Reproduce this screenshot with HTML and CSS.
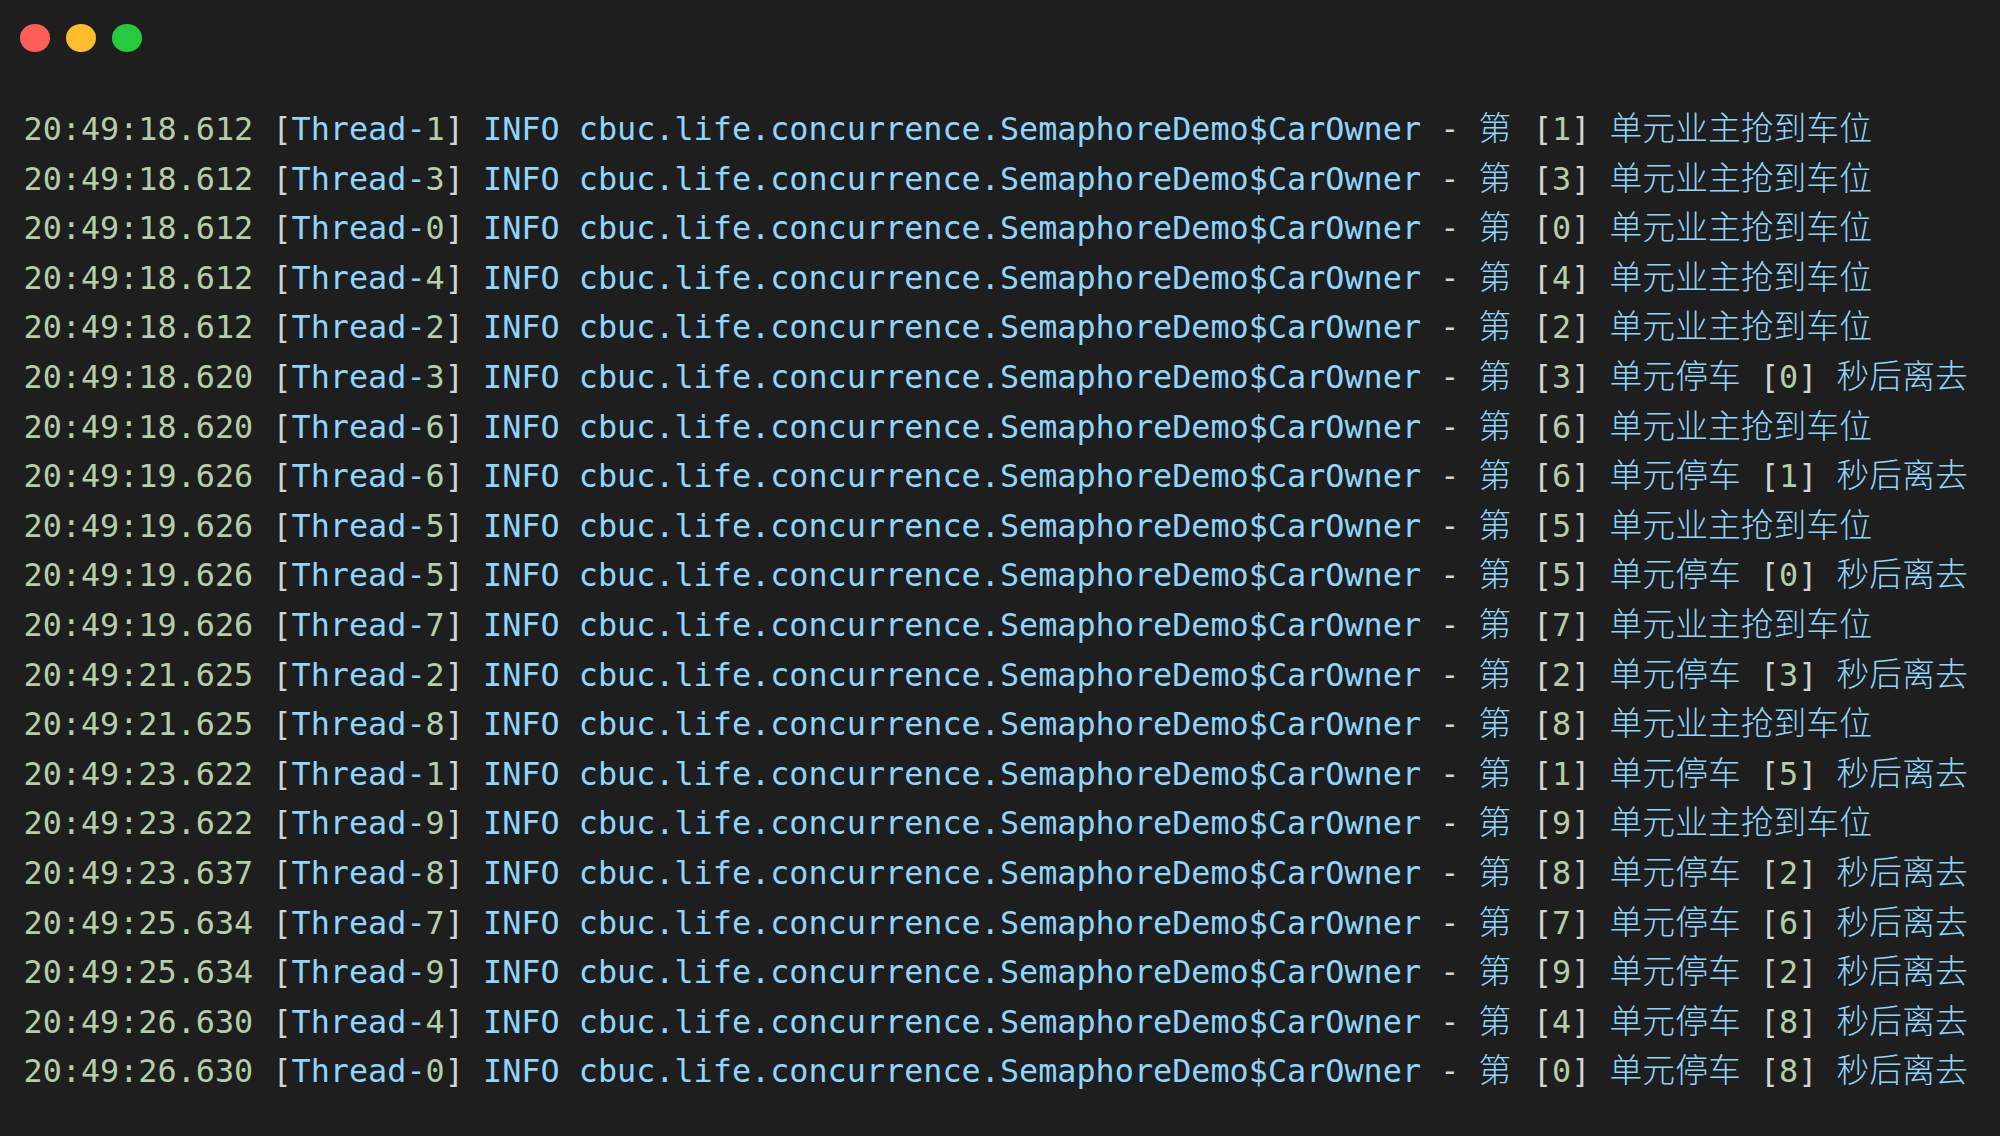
FILE: index.html
```html
<!DOCTYPE html>
<html lang="zh">
<head>
<meta charset="utf-8">
<title>Terminal</title>
<link rel="stylesheet" href="styles.css">
</head>
<body>
<div class="window">
<div class="lights"><i class="light red"></i><i class="light yellow"></i><i class="light green"></i></div>
<pre class="log" id="log">
<span class="n">20:49:18.612</span> <span class="b">[</span>Thread-<span class="n">1</span><span class="b">]</span> INFO cbuc.life.concurrence.SemaphoreDemo$CarOwner <span class="d">-</span> <span class="z">第</span> <span class="b">[</span><span class="n">1</span><span class="b">]</span> <span class="z">单元业主抢到车位</span>
<span class="n">20:49:18.612</span> <span class="b">[</span>Thread-<span class="n">3</span><span class="b">]</span> INFO cbuc.life.concurrence.SemaphoreDemo$CarOwner <span class="d">-</span> <span class="z">第</span> <span class="b">[</span><span class="n">3</span><span class="b">]</span> <span class="z">单元业主抢到车位</span>
<span class="n">20:49:18.612</span> <span class="b">[</span>Thread-<span class="n">0</span><span class="b">]</span> INFO cbuc.life.concurrence.SemaphoreDemo$CarOwner <span class="d">-</span> <span class="z">第</span> <span class="b">[</span><span class="n">0</span><span class="b">]</span> <span class="z">单元业主抢到车位</span>
<span class="n">20:49:18.612</span> <span class="b">[</span>Thread-<span class="n">4</span><span class="b">]</span> INFO cbuc.life.concurrence.SemaphoreDemo$CarOwner <span class="d">-</span> <span class="z">第</span> <span class="b">[</span><span class="n">4</span><span class="b">]</span> <span class="z">单元业主抢到车位</span>
<span class="n">20:49:18.612</span> <span class="b">[</span>Thread-<span class="n">2</span><span class="b">]</span> INFO cbuc.life.concurrence.SemaphoreDemo$CarOwner <span class="d">-</span> <span class="z">第</span> <span class="b">[</span><span class="n">2</span><span class="b">]</span> <span class="z">单元业主抢到车位</span>
<span class="n">20:49:18.620</span> <span class="b">[</span>Thread-<span class="n">3</span><span class="b">]</span> INFO cbuc.life.concurrence.SemaphoreDemo$CarOwner <span class="d">-</span> <span class="z">第</span> <span class="b">[</span><span class="n">3</span><span class="b">]</span> <span class="z">单元停车</span> <span class="b">[</span><span class="n">0</span><span class="b">]</span> <span class="z">秒后离去</span>
<span class="n">20:49:18.620</span> <span class="b">[</span>Thread-<span class="n">6</span><span class="b">]</span> INFO cbuc.life.concurrence.SemaphoreDemo$CarOwner <span class="d">-</span> <span class="z">第</span> <span class="b">[</span><span class="n">6</span><span class="b">]</span> <span class="z">单元业主抢到车位</span>
<span class="n">20:49:19.626</span> <span class="b">[</span>Thread-<span class="n">6</span><span class="b">]</span> INFO cbuc.life.concurrence.SemaphoreDemo$CarOwner <span class="d">-</span> <span class="z">第</span> <span class="b">[</span><span class="n">6</span><span class="b">]</span> <span class="z">单元停车</span> <span class="b">[</span><span class="n">1</span><span class="b">]</span> <span class="z">秒后离去</span>
<span class="n">20:49:19.626</span> <span class="b">[</span>Thread-<span class="n">5</span><span class="b">]</span> INFO cbuc.life.concurrence.SemaphoreDemo$CarOwner <span class="d">-</span> <span class="z">第</span> <span class="b">[</span><span class="n">5</span><span class="b">]</span> <span class="z">单元业主抢到车位</span>
<span class="n">20:49:19.626</span> <span class="b">[</span>Thread-<span class="n">5</span><span class="b">]</span> INFO cbuc.life.concurrence.SemaphoreDemo$CarOwner <span class="d">-</span> <span class="z">第</span> <span class="b">[</span><span class="n">5</span><span class="b">]</span> <span class="z">单元停车</span> <span class="b">[</span><span class="n">0</span><span class="b">]</span> <span class="z">秒后离去</span>
<span class="n">20:49:19.626</span> <span class="b">[</span>Thread-<span class="n">7</span><span class="b">]</span> INFO cbuc.life.concurrence.SemaphoreDemo$CarOwner <span class="d">-</span> <span class="z">第</span> <span class="b">[</span><span class="n">7</span><span class="b">]</span> <span class="z">单元业主抢到车位</span>
<span class="n">20:49:21.625</span> <span class="b">[</span>Thread-<span class="n">2</span><span class="b">]</span> INFO cbuc.life.concurrence.SemaphoreDemo$CarOwner <span class="d">-</span> <span class="z">第</span> <span class="b">[</span><span class="n">2</span><span class="b">]</span> <span class="z">单元停车</span> <span class="b">[</span><span class="n">3</span><span class="b">]</span> <span class="z">秒后离去</span>
<span class="n">20:49:21.625</span> <span class="b">[</span>Thread-<span class="n">8</span><span class="b">]</span> INFO cbuc.life.concurrence.SemaphoreDemo$CarOwner <span class="d">-</span> <span class="z">第</span> <span class="b">[</span><span class="n">8</span><span class="b">]</span> <span class="z">单元业主抢到车位</span>
<span class="n">20:49:23.622</span> <span class="b">[</span>Thread-<span class="n">1</span><span class="b">]</span> INFO cbuc.life.concurrence.SemaphoreDemo$CarOwner <span class="d">-</span> <span class="z">第</span> <span class="b">[</span><span class="n">1</span><span class="b">]</span> <span class="z">单元停车</span> <span class="b">[</span><span class="n">5</span><span class="b">]</span> <span class="z">秒后离去</span>
<span class="n">20:49:23.622</span> <span class="b">[</span>Thread-<span class="n">9</span><span class="b">]</span> INFO cbuc.life.concurrence.SemaphoreDemo$CarOwner <span class="d">-</span> <span class="z">第</span> <span class="b">[</span><span class="n">9</span><span class="b">]</span> <span class="z">单元业主抢到车位</span>
<span class="n">20:49:23.637</span> <span class="b">[</span>Thread-<span class="n">8</span><span class="b">]</span> INFO cbuc.life.concurrence.SemaphoreDemo$CarOwner <span class="d">-</span> <span class="z">第</span> <span class="b">[</span><span class="n">8</span><span class="b">]</span> <span class="z">单元停车</span> <span class="b">[</span><span class="n">2</span><span class="b">]</span> <span class="z">秒后离去</span>
<span class="n">20:49:25.634</span> <span class="b">[</span>Thread-<span class="n">7</span><span class="b">]</span> INFO cbuc.life.concurrence.SemaphoreDemo$CarOwner <span class="d">-</span> <span class="z">第</span> <span class="b">[</span><span class="n">7</span><span class="b">]</span> <span class="z">单元停车</span> <span class="b">[</span><span class="n">6</span><span class="b">]</span> <span class="z">秒后离去</span>
<span class="n">20:49:25.634</span> <span class="b">[</span>Thread-<span class="n">9</span><span class="b">]</span> INFO cbuc.life.concurrence.SemaphoreDemo$CarOwner <span class="d">-</span> <span class="z">第</span> <span class="b">[</span><span class="n">9</span><span class="b">]</span> <span class="z">单元停车</span> <span class="b">[</span><span class="n">2</span><span class="b">]</span> <span class="z">秒后离去</span>
<span class="n">20:49:26.630</span> <span class="b">[</span>Thread-<span class="n">4</span><span class="b">]</span> INFO cbuc.life.concurrence.SemaphoreDemo$CarOwner <span class="d">-</span> <span class="z">第</span> <span class="b">[</span><span class="n">4</span><span class="b">]</span> <span class="z">单元停车</span> <span class="b">[</span><span class="n">8</span><span class="b">]</span> <span class="z">秒后离去</span>
<span class="n">20:49:26.630</span> <span class="b">[</span>Thread-<span class="n">0</span><span class="b">]</span> INFO cbuc.life.concurrence.SemaphoreDemo$CarOwner <span class="d">-</span> <span class="z">第</span> <span class="b">[</span><span class="n">0</span><span class="b">]</span> <span class="z">单元停车</span> <span class="b">[</span><span class="n">8</span><span class="b">]</span> <span class="z">秒后离去</span></pre>
</div>
</body>
</html>
```
FILE: styles.css
```css
html, body {
  margin: 0;
  padding: 0;
  height: 100%;
  background: #1e1e1e;
  overflow: hidden;
}
.window {
  height: 1136px;
  background: #1e1e1e;
  box-sizing: border-box;
  padding: 24px 0 0 20px;
}
.lights {
  display: flex;
  gap: 16px;
  height: 28px;
}
.light {
  display: block;
  width: 30px;
  height: 28px;
  border-radius: 50%;
}
.red { background: #ff5f56; }
.yellow { background: #ffbd2e; }
.green { background: #27c93f; }
.log {
  margin: 52px 0 0 3.5px;
  font-family: "DejaVu Sans Mono", "Noto Sans CJK SC", monospace;
  font-size: 31.8px;
  line-height: 49.6px;
  color: #90d5fc;
}
.n { color: #b5cea8; }
.b { color: #d4d4d4; }
.d { color: #d4d4d4; }
.z {
  font-size: 32.8px;
  line-height: 1;
  font-weight: 300;
}
.d + .z { margin-right: 2.5px; }
```
